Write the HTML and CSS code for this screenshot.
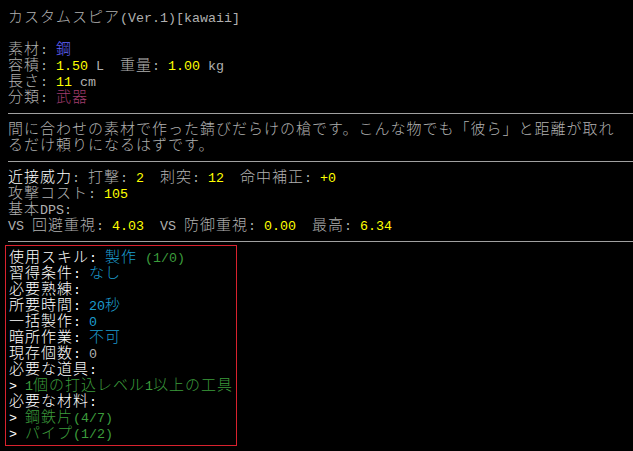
FILE: index.html
```html
<!DOCTYPE html>
<html lang="ja">
<head>
    <meta charset="UTF-8">
    <title>カスタムスピア</title>
    <link rel="stylesheet" href="styles.css">
</head>
<body>
    <div class="screen">
        <div class="row">カスタムスピア<span class="a">(Ver.1)[kawaii]</span></div>
        <div class="row"></div>
        <div class="row">素材<span class="a">: </span><span class="b">鋼</span></div>
        <div class="row">容積<span class="a">: </span><span class="a y">1.50</span><span class="a"> L  </span>重量<span class="a">: </span><span class="a y">1.00</span><span class="a"> kg</span></div>
        <div class="row">長さ<span class="a">: </span><span class="a y">11</span><span class="a"> cm</span></div>
        <div class="row">分類<span class="a">: </span><span class="m">武器</span></div>
        <div class="sep"></div>
        <div class="row">間に合わせの素材で作った錆びだらけの槍です。こんな物でも「彼ら」と距離が取れ</div>
        <div class="row">るだけ頼りになるはずです。</div>
        <div class="sep"></div>
        <div class="row"><span class="w">近接威力</span><span class="a">: </span>打撃<span class="a">: </span><span class="a y">2</span><span class="a">  </span>刺突<span class="a">: </span><span class="a y">12</span><span class="a">  </span>命中補正<span class="a">: </span><span class="a y">+0</span></div>
        <div class="row">攻撃コスト<span class="a">: </span><span class="a y">105</span></div>
        <div class="row">基本<span class="a">DPS:</span></div>
        <div class="row"><span class="a">VS </span>回避重視<span class="a">: </span><span class="a y">4.03</span><span class="a">  VS </span>防御重視<span class="a">: </span><span class="a y">0.00</span><span class="a">  </span>最高<span class="a">: </span><span class="a y">6.34</span></div>
        <div class="sep last"></div>

        <div class="recipe">
            <div class="row w">使用スキル<span class="a">: </span><span class="c">製作</span><span class="a g"> (1/0)</span></div>
            <div class="row w">習得条件<span class="a">: </span><span class="c">なし</span></div>
            <div class="row w">必要熟練<span class="a">:</span></div>
            <div class="row w">所要時間<span class="a">: </span><span class="a c">20</span><span class="c">秒</span></div>
            <div class="row w">一括製作<span class="a">: </span><span class="a c">0</span></div>
            <div class="row w">暗所作業<span class="a">: </span><span class="c">不可</span></div>
            <div class="row w">現存個数<span class="a">: </span><span class="a k">0</span></div>
            <div class="row w">必要な道具<span class="a">:</span></div>
            <div class="row w"><span class="a">&gt; </span><span class="g"><span class="a">1</span>個の打込レベル<span class="a">1</span>以上の工具</span></div>
            <div class="row w">必要な材料<span class="a">:</span></div>
            <div class="row w"><span class="a">&gt; </span><span class="g">鋼鉄片<span class="a">(4/7)</span></span></div>
            <div class="row w"><span class="a">&gt; </span><span class="g">パイプ<span class="a">(1/2)</span></span></div>
        </div>
    </div>
</body>
</html>
```

FILE: styles.css
```css
body {
    margin: 0;
    background-color: #000;
    color: #b0b0b0;
    font-family: "Noto Sans CJK JP", sans-serif;
    font-size: 15px;
    font-weight: 300;
    letter-spacing: 1px;
    overflow: hidden;
}
.screen {
    padding: 8px 0 0 8px;
}
.row {
    height: 16px;
    line-height: 16px;
    white-space: pre;
}
.a {
    font-family: "Liberation Mono", monospace;
    font-size: 13.33px;
    font-weight: 400;
    letter-spacing: 0;
}
.sep {
    height: 9px;
    border-bottom: 1px solid #a0a0a0;
    margin-bottom: 6px;
}
.sep.last {
    margin-bottom: 3px;
}
.recipe {
    box-sizing: border-box;
    width: 232px;
    margin-left: -3px;
    padding: 2px 3px 5px 3px;
    border: 1px solid #d8222e;
}
.k { color: #b0b0b0; }
.w { color: #ffffff; }
.y { color: #ffff00; }
.b { color: #6464ff; }
.m { color: #a03c6e; }
.c { color: #1c9cce; }
.g { color: #3c9c3c; }
```
